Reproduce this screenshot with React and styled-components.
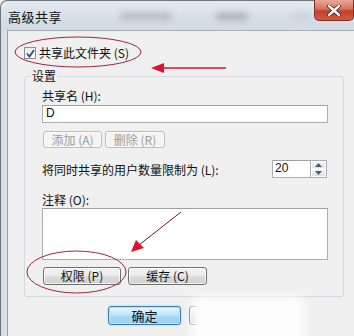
import React from 'react'
import styled, { createGlobalStyle } from 'styled-components'

const GlobalStyle = createGlobalStyle`
  html, body {
    margin: 0;
    padding: 0;
    background: #f0f0f0;
  }
  body {
    font-family: "Noto Sans CJK SC", "Noto Sans", sans-serif;
    font-size: 12px;
    color: #111;
  }
`;

const Window = styled.div`
  position: relative;
  width: 354px;
  height: 336px;
  overflow: hidden;
  background: #f0f0f0;
  display: flex;
  flex-direction: column;
`;

const TitleBar = styled.div`
  height: 30px;
  flex-shrink: 0;
  display: flex;
  align-items: flex-start;
  background: linear-gradient(180deg, #e4eaf0 0%, #d6dee7 60%, #d2dae3 100%);
  border-top-left-radius: 7px;
  border-top: 1px solid #6d7680;
  border-left: 1px solid #6d7680;
  box-sizing: border-box;
`;

const Title = styled.div`
  font-size: 13px;
  line-height: 16px;
  padding: 8px 0 0 7px;
  color: #111;
  letter-spacing: 0.5px;
`;

const Smudge = styled.div`
  margin-top: 12px;
  margin-left: ${({ $gap }) => $gap}px;
  width: ${({ $w }) => $w}px;
  height: 7px;
  background: ${({ $c }) => $c};
  filter: blur(3px);
  border-radius: 4px;
`;

const CloseButton = styled.div`
  margin-left: auto;
  margin-top: -1px;
  width: 40px;
  height: 21px;
  box-sizing: border-box;
  border: 1px solid #7b2f25;
  border-top: none;
  border-radius: 0 0 5px 5px;
  background: linear-gradient(180deg, #e9a99a 0%, #d9705c 45%, #c4412b 55%, #cf5a3f 100%);
  display: flex;
  align-items: center;
  justify-content: center;
`;

const Body = styled.div`
  flex: 1;
  display: flex;
`;

const Frame = styled.div`
  width: 8px;
  box-sizing: border-box;
  border-left: 1px solid #6d7680;
  border-right: 1px solid #9aa3ad;
  background: linear-gradient(90deg, #d2dae3, #dde4eb);
`;

const Client = styled.div`
  flex: 1;
  border-top: 1px solid #a7b0ba;
  background: #f0f0f0;
  padding: 15px 0 0 16px;
  display: flex;
  flex-direction: column;
`;

const CheckRow = styled.label`
  display: flex;
  align-items: center;
  gap: 3px;
  height: 14px;
  line-height: 14px;
`;

const CheckBox = styled.span`
  width: 12px;
  height: 12px;
  box-sizing: border-box;
  border: 1px solid #8e8f8f;
  background: linear-gradient(135deg, #e6e6e6, #ffffff);
  display: flex;
  align-items: center;
  justify-content: center;
`;

const Group = styled.fieldset`
  margin: 9px 0 0 0;
  padding: 0 0 11px 8px;
  border: 1px solid #d5d9dd;
  border-radius: 3px;
  width: 320px;
  box-sizing: border-box;
  min-width: 0;
`;

const Legend = styled.legend`
  padding: 0 1px;
  margin-left: -2px;
  line-height: 14px;
`;

const GroupInner = styled.div`
  padding-left: 9px;
  width: 286px;
  display: flex;
  flex-direction: column;
`;

const Label = styled.div`
  line-height: 14px;
  margin-top: ${({ $mt }) => $mt}px;
`;

const TextBox = styled.div`
  margin-top: ${({ $mt }) => $mt}px;
  height: ${({ $h }) => $h}px;
  box-sizing: border-box;
  border: 1px solid #abadb3;
  border-top-color: #9ea1a8;
  background: #fff;
  font-family: "Liberation Sans", "Noto Sans", sans-serif;
  font-size: 12px;
  line-height: 15px;
  padding-left: 3px;
`;

const ButtonRow = styled.div`
  display: flex;
  gap: ${({ $gap }) => $gap}px;
  margin-top: ${({ $mt }) => $mt}px;
  padding-left: ${({ $pl }) => $pl || 1}px;
`;

const Button = styled.div`
  width: ${({ $w }) => $w}px;
  height: ${({ $h }) => $h}px;
  box-sizing: border-box;
  border-radius: 3px;
  display: flex;
  align-items: center;
  justify-content: center;
  line-height: 14px;
  border: 1px solid ${({ $disabled }) => ($disabled ? '#bcbcbc' : '#707070')};
  color: ${({ $disabled }) => ($disabled ? '#9c9c9c' : '#111')};
  background: ${({ $disabled }) =>
    $disabled
      ? '#f4f4f4'
      : 'linear-gradient(180deg, #f2f2f2 0%, #ebebeb 48%, #dddddd 52%, #cfcfcf 100%)'};
  box-shadow: inset 0 0 0 1px rgba(255, 255, 255, 0.7);
`;

const DefaultButton = styled(Button)`
  border: 1px solid #3c7fb1;
  background: linear-gradient(180deg, #e8f6fd 0%, #bee6fd 48%, #a7d9f5 52%, #9bd0ee 100%);
  box-shadow: inset 0 0 0 1px #b6e5fb, 0 0 2px #7fc8ee;
  font-size: 13px;
`;

const LimitRow = styled.div`
  margin-top: 12px;
  display: flex;
  align-items: center;
  justify-content: space-between;
  padding-right: 1px;
`;

const Spinner = styled.div`
  display: flex;
  height: 18px;
`;

const SpinInput = styled(TextBox)`
  width: 38px;
  margin-top: 0;
  height: 18px;
  border-right: none;
  padding-left: 2px;
`;

const SpinButtons = styled.div`
  width: 17px;
  box-sizing: border-box;
  border: 1px solid #a9adb3;
  display: flex;
  flex-direction: column;
  background: #eef0f3;
`;

const SpinHalf = styled.div`
  flex: 1;
  display: flex;
  align-items: center;
  justify-content: center;
  background: linear-gradient(180deg, #f4f5f7, #dde1e6);
  border: 1px solid #fff;
`;

const BottomRow = styled.div`
  display: flex;
  gap: 8px;
  margin-top: 9px;
  padding-left: 84px;
`;

const Overlay = styled.svg`
  position: absolute;
  left: 0;
  top: 0;
  pointer-events: none;
`;

const Watermark = styled.div`
  position: absolute;
  left: 192px;
  top: 297px;
  width: 112px;
  height: 48px;
  background: #fdfdfd;
  filter: blur(4px);
`;

const Caret = ({ up }) => (
  <svg width="7" height="4" viewBox="0 0 7 4">
    <path d={up ? 'M0 4 L3.5 0 L7 4 Z' : 'M0 0 L3.5 4 L7 0 Z'} fill="#4d5a66" />
  </svg>
);

const App = () => {
  return (
    <>
      <GlobalStyle />
      <Window>
        <TitleBar>
          <Title>高级共享</Title>
          <Smudge $gap={58} $w={52} $c="#b3bac3" />
          <Smudge $gap={44} $w={32} $c="#a8afb8" />
          <Smudge $gap={44} $w={18} $c="#c9d0d8" />
          <CloseButton>
            <svg width="14" height="11" viewBox="0 0 14 11">
              <path d="M2 1 L12 10 M12 1 L2 10" stroke="#3b1a14" strokeWidth="4" strokeLinecap="round" />
              <path d="M2 1 L12 10 M12 1 L2 10" stroke="#ffffff" strokeWidth="2.4" strokeLinecap="round" />
            </svg>
          </CloseButton>
        </TitleBar>
        <Body>
          <Frame />
          <Client>
            <CheckRow>
              <CheckBox>
                <svg width="9" height="9" viewBox="0 0 9 9">
                  <path d="M1 4.5 L3.5 7.5 L8 1" stroke="#2c4a86" strokeWidth="1.8" fill="none" />
                </svg>
              </CheckBox>
              共享此文件夹 (S)
            </CheckRow>
            <Group>
              <Legend>设置</Legend>
              <GroupInner>
                <Label $mt={6}>共享名 (H):</Label>
                <TextBox $mt={2} $h={18}>D</TextBox>
                <ButtonRow $gap={3} $mt={8}>
                  <Button $w={59} $h={17} $disabled>添加 (A)</Button>
                  <Button $w={60} $h={17} $disabled>删除 (R)</Button>
                </ButtonRow>
                <LimitRow>
                  <span>将同时共享的用户数量限制为 (L):</span>
                  <Spinner>
                    <SpinInput>20</SpinInput>
                    <SpinButtons>
                      <SpinHalf><Caret up /></SpinHalf>
                      <SpinHalf><Caret /></SpinHalf>
                    </SpinButtons>
                  </Spinner>
                </LimitRow>
                <Label $mt={15}>注释 (O):</Label>
                <TextBox $mt={1} $h={52} />
                <ButtonRow $gap={7} $mt={7}>
                  <Button $w={78} $h={18}>权限 (P)</Button>
                  <Button $w={79} $h={18}>缓存 (C)</Button>
                </ButtonRow>
              </GroupInner>
            </Group>
            <BottomRow>
              <DefaultButton $w={73} $h={19}>确定</DefaultButton>
              <Button $w={73} $h={19}>取消</Button>
            </BottomRow>
          </Client>
        </Body>
        <Watermark />
        <Overlay width="354" height="336" viewBox="0 0 354 336">
          <ellipse cx="78" cy="52" rx="63" ry="15" fill="none" stroke="#a3243c" strokeWidth="1" />
          <line x1="226" y1="68" x2="160" y2="68" stroke="#d8162c" strokeWidth="1.6" />
          <polygon points="151,68 164,63 164,73" fill="#e0102a" />
          <line x1="181" y1="212" x2="139" y2="245" stroke="#6e1828" strokeWidth="1" />
          <polygon points="131,252 136,240 144,248" fill="#e0102a" />
          <ellipse cx="76.5" cy="272" rx="49.5" ry="21" fill="none" stroke="#a3243c" strokeWidth="1" />
        </Overlay>
      </Window>
    </>
  )
}

export default App
